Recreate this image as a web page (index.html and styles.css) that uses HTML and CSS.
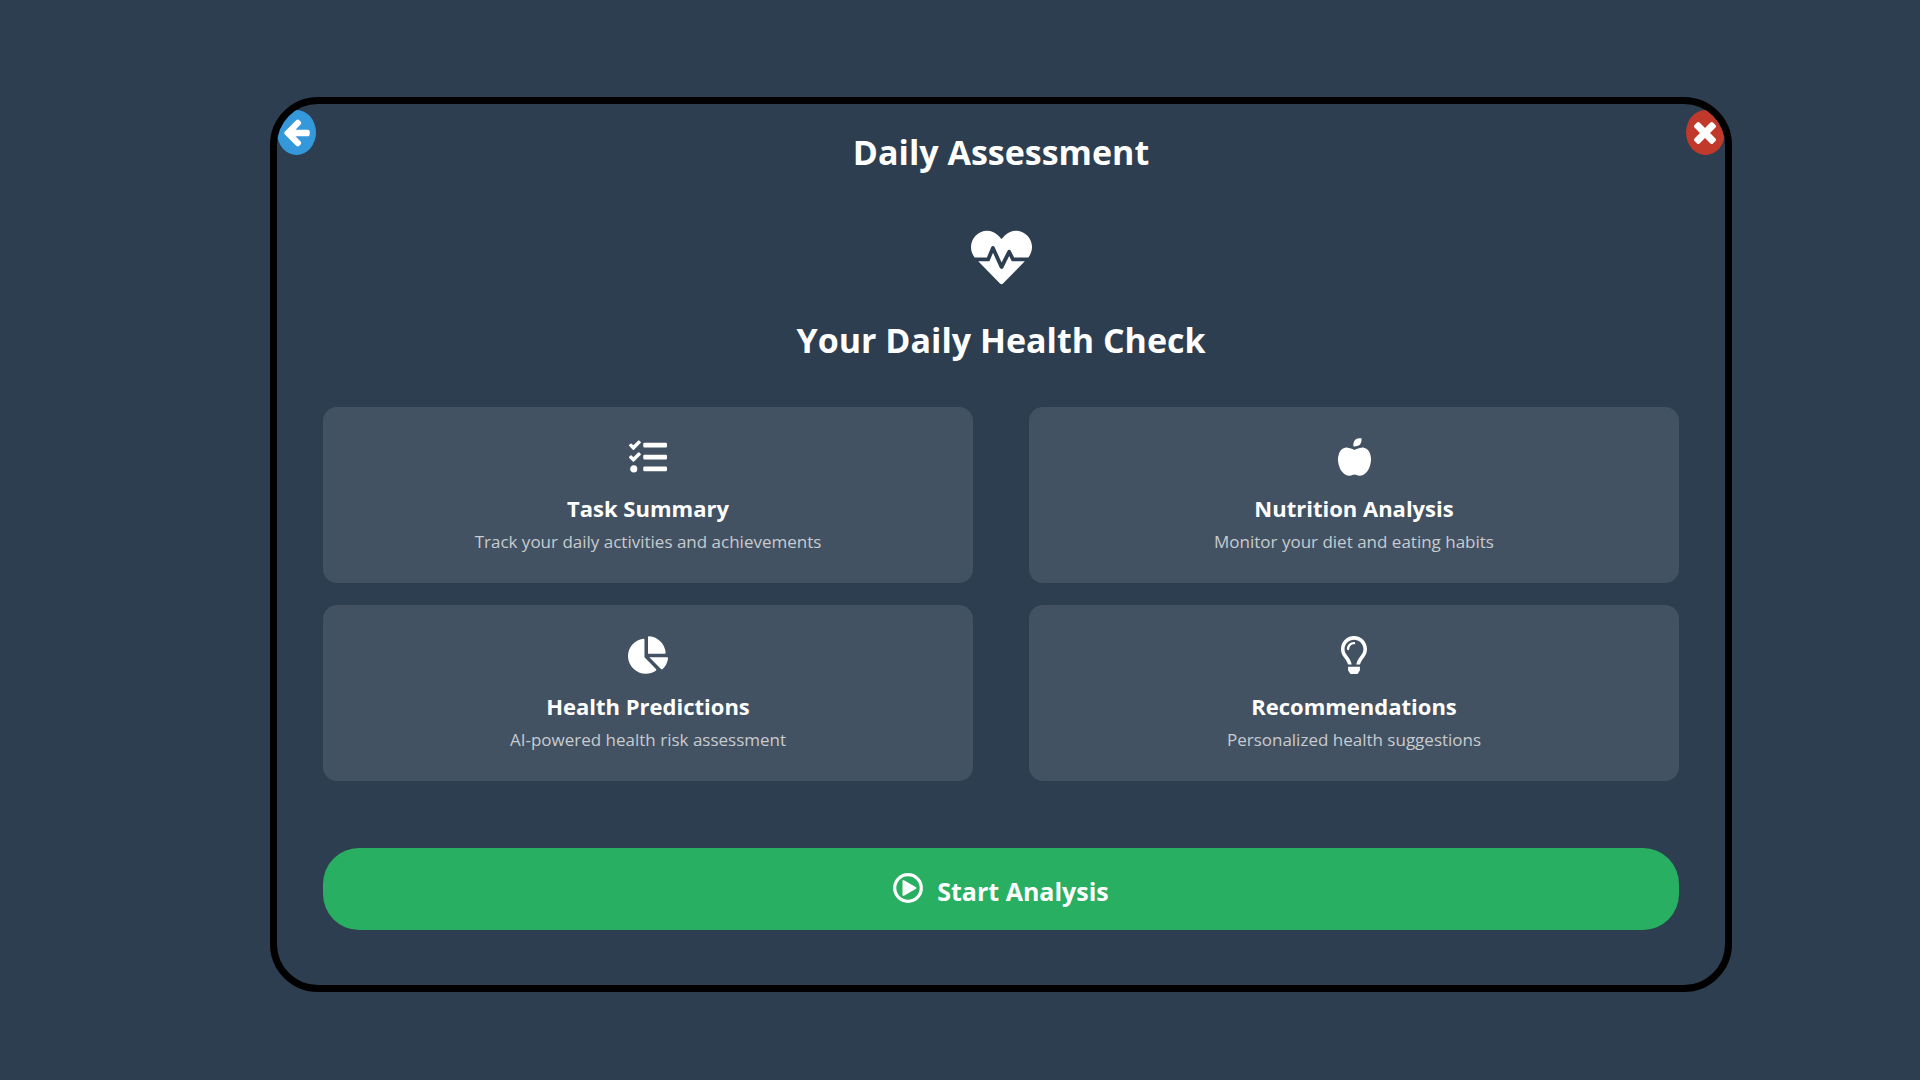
FILE: index.html
```html
<!DOCTYPE html>
<html lang="en">
<head>
<meta charset="utf-8">
<meta name="viewport" content="width=device-width, initial-scale=1">
<title>Daily Assessment</title>
<link rel="stylesheet" href="styles.css">
</head>
<body>
<main class="panel">
  <header class="panel-header">
    <button class="round-button back" type="button" aria-label="Back">
      <svg width="26" height="28" viewBox="64 150 1472 1620" aria-hidden="true"><path d="M1536 896v128q0 53-32.500 90.500t-84.500 37.500h-704l293 294q38 36 38 90t-38 90l-75 76q-37 37-90 37-52 0-91-37l-651-652q-37-37-37-90 0-52 37-91l651-650q38-38 91-38 52 0 90 38l75 74q38 38 38 91t-38 91l-293 293h704q52 0 84.500 37.500t32.500 90.500z"/></svg>
    </button>
    <h1 class="title">Daily Assessment</h1>
    <button class="round-button close" type="button" aria-label="Close">
      <svg width="22" height="22" viewBox="302 366 1188 1188" aria-hidden="true"><path d="M1490 1322q0 40-28 68l-136 136q-28 28-68 28t-68-28l-294-294-294 294q-28 28-68 28t-68-28l-136-136q-28-28-28-68t28-68l294-294-294-294q-28-28-28-68t28-68l136-136q28-28 68-28t68 28l294 294 294-294q28-28 68-28t68 28l136 136q28 28 28 68t-28 68l-294 294 294 294q28 28 28 68z"/></svg>
    </button>
  </header>

  <section class="intro">
    <svg width="61" height="61" viewBox="0 0 512 512" aria-hidden="true"><path d="M320.2 243.8l-49.7 99.4c-6 12.1-23.4 11.7-28.9-.6l-56.9-126.3-30 71.7H60.6l182.5 186.5c7.1 7.3 18.6 7.3 25.7 0L451.4 288H342.3l-22.1-44.2zM473.7 73.9l-2.4-2.5c-51.5-52.6-135.8-52.6-187.4 0L256 100l-27.9-28.5c-51.5-52.7-135.9-52.7-187.4 0l-2.4 2.4C-10.4 123.7-12.5 203 31 256h102.4l35.9-86.2c5.4-12.9 23.6-13.1 29.3-.4l58.2 129.3 49-97.9c5.9-11.8 22.7-11.8 28.6 0l27.6 55.2H481c43.5-53 41.4-132.3-7.3-182.1z"/></svg>
    <h2 class="title">Your Daily Health Check</h2>
  </section>

  <section class="cards">
    <article class="card">
      <svg width="38" height="38" viewBox="0 0 512 512" aria-hidden="true"><path d="M139.61 35.5a12 12 0 0 0-17 0L58.93 98.81l-22.7-22.12a12 12 0 0 0-17 0L3.53 92.41a12 12 0 0 0 0 17l47.59 47.4a12.78 12.78 0 0 0 17.61 0l15.59-15.62L156.52 69a12.09 12.09 0 0 0 .09-17zm0 159.19a12 12 0 0 0-17 0l-63.68 63.72-22.7-22.1a12 12 0 0 0-17 0L3.53 252a12 12 0 0 0 0 17L51 316.5a12.77 12.77 0 0 0 17.6 0l15.7-15.69 72.2-72.22a12 12 0 0 0 .09-16.9zM64 368c-26.49 0-48.59 21.5-48.59 48S37.53 464 64 464a48 48 0 0 0 0-96zm432 16H208a16 16 0 0 0-16 16v32a16 16 0 0 0 16 16h288a16 16 0 0 0 16-16v-32a16 16 0 0 0-16-16zm0-320H208a16 16 0 0 0-16 16v32a16 16 0 0 0 16 16h288a16 16 0 0 0 16-16V80a16 16 0 0 0-16-16zm0 160H208a16 16 0 0 0-16 16v32a16 16 0 0 0 16 16h288a16 16 0 0 0 16-16v-32a16 16 0 0 0-16-16z"/></svg>
      <h3>Task Summary</h3>
      <p>Track your daily activities and achievements</p>
    </article>
    <article class="card">
      <svg width="33" height="38" viewBox="0 0 448 512" aria-hidden="true"><path d="M350.85 129c25.97 4.67 47.27 18.67 63.92 42 14.65 20.67 24.64 46.67 29.96 78 4.67 28.67 4.32 57.33-1 86-7.99 47.33-23.97 87-47.94 119-28.64 38.67-64.59 58-107.87 58-10.66 0-22.3-3.33-34.96-10-8.66-5.33-18.31-8-28.97-8s-20.3 2.67-28.97 8c-12.66 6.67-24.3 10-34.96 10-43.28 0-79.23-19.33-107.87-58-23.97-32-39.95-71.67-47.94-119-5.32-28.67-5.67-57.33-1-86 5.32-31.33 15.31-57.33 29.96-78 16.65-23.33 37.95-37.33 63.92-42 15.98-2.67 37.95-.33 65.92 7 23.97 6.67 44.28 14.67 60.93 24 16.65-9.33 36.96-17.33 60.93-24 27.98-7.33 49.96-9.67 65.94-7zm-54.94-41c-9.32 8.67-21.65 15-36.96 19-10.66 3.33-22.3 5-34.96 5l-14.98-1c-1.33-9.33-1.33-20 0-32 2.67-24 10.32-42.33 22.97-55 9.32-8.67 21.65-15 36.96-19 10.66-3.33 22.3-5 34.96-5l14.98 1 1 15c0 12.67-1.67 24.33-4.99 35-3.99 15.33-10.31 27.67-18.98 37z"/></svg>
      <h3>Nutrition Analysis</h3>
      <p>Monitor your diet and eating habits</p>
    </article>
    <article class="card">
      <svg width="40" height="38" viewBox="0 0 544 512" aria-hidden="true"><path d="M527.79 288H290.5l158.03 158.03c6.04 6.04 15.98 6.53 22.19.68 38.7-36.46 65.32-85.61 73.13-140.86 1.34-9.46-6.51-17.85-16.06-17.85zm-15.83-64.8C503.72 103.74 408.26 8.28 288.8.04 279.68-.59 272 7.1 272 16.24V240h223.77c9.14 0 16.82-7.68 16.19-16.8zM224 288V50.71c0-9.55-8.39-17.4-17.84-16.06C86.99 51.49-4.1 155.6.14 280.37 4.5 408.51 114.83 513.13 243.03 511.98c50.4-.45 96.96-15.83 135.29-41.96 7.91-5.39 8.42-16.92 1.67-23.67L224 288z"/></svg>
      <h3>Health Predictions</h3>
      <p>AI-powered health risk assessment</p>
    </article>
    <article class="card">
      <svg width="26" height="38" viewBox="0 0 352 512" aria-hidden="true"><path d="M176 80c-52.94 0-96 43.06-96 96 0 8.84 7.16 16 16 16s16-7.16 16-16c0-35.3 28.72-64 64-64 8.84 0 16-7.16 16-16s-7.16-16-16-16zM96.06 459.17c0 3.15.93 6.22 2.68 8.84l24.51 36.84c2.97 4.46 7.97 7.14 13.32 7.14h78.85c5.36 0 10.36-2.68 13.32-7.14l24.51-36.84c1.74-2.62 2.67-5.7 2.68-8.84l.05-43.18H96.02l.04 43.18zM176 0C73.72 0 0 82.97 0 176c0 44.37 16.45 84.85 43.56 115.78 16.64 18.99 42.74 58.8 52.42 92.16v.06h48v-.12c-.01-4.77-.72-9.51-2.15-14.07-5.59-17.81-22.82-64.77-62.17-109.67-20.54-23.43-31.52-53.15-31.61-84.14-.2-73.64 59.67-128 127.95-128 70.58 0 128 57.42 128 128 0 30.97-11.24 60.85-31.65 84.14-39.11 44.61-56.42 91.47-62.1 109.46a47.507 47.507 0 0 0-2.22 14.3v.1h48v-.05c9.68-33.37 35.78-73.18 52.42-92.16C335.55 260.85 352 220.37 352 176 352 78.8 273.2 0 176 0z"/></svg>
      <h3>Recommendations</h3>
      <p>Personalized health suggestions</p>
    </article>
  </section>

  <button class="start" type="button">
    <svg width="30" height="30" viewBox="0 0 30 30" aria-hidden="true"><circle cx="15" cy="15" r="13.300" fill="none" stroke="#fff" stroke-width="3.200"/><path d="M10.500 8v14L22.500 15z" stroke="#fff" stroke-width="2" stroke-linejoin="round"/></svg>
    <span>Start Analysis</span>
  </button>
</main>
</body>
</html>
```
FILE: styles.css
```css
* {
  box-sizing: border-box;
}

body {
  margin: 0;
  min-height: 100vh;
  padding: 97px 188px 88px 270px;
  background: #2d3e50;
  color: #fff;
  font-family: "Open Sans", "Noto Sans", sans-serif;
}

h1, h2, h3, p {
  margin: 0;
}

svg {
  display: block;
  flex: none;
  fill: #fff;
}

button {
  border: 0;
  padding: 0;
  color: inherit;
  font: inherit;
  cursor: pointer;
}

.panel {
  display: flex;
  flex-direction: column;
  overflow: hidden;
  padding-bottom: 55px;
  border: 7px solid #000;
  border-radius: 48px;
}

.panel-header {
  display: flex;
  align-items: flex-start;
  justify-content: space-between;
  padding-top: 6px;
}

.round-button {
  display: flex;
  align-items: center;
  justify-content: center;
  width: 39px;
  height: 45px;
  border-radius: 50%;
}

.back {
  background: #3498db;
}

.close {
  background: #c0392b;
}

.title {
  font-size: 34px;
  line-height: 48px;
  font-weight: 700;
}

.panel-header .title {
  padding-top: 18px;
}

.intro {
  display: flex;
  flex-direction: column;
  align-items: center;
  gap: 28px;
  padding-top: 51px;
}

.cards {
  display: grid;
  grid-template-columns: 1fr 1fr;
  gap: 22px 56px;
  padding: 43px 46px 0;
}

.card {
  display: flex;
  flex-direction: column;
  align-items: center;
  min-height: 176px;
  padding: 31px 24px 24px;
  border-radius: 14px;
  background: #435262;
  text-align: center;
}

.card h3 {
  margin-top: 14px;
  font-size: 22px;
  line-height: 36px;
}

.card p {
  margin-top: 4px;
  color: #c7cbd0;
  font-size: 17px;
  line-height: 24px;
}

.start {
  display: flex;
  align-items: center;
  justify-content: center;
  gap: 14px;
  height: 82px;
  margin: 67px 46px 0;
  border-radius: 36px;
  background: #29af61;
  font-size: 25px;
  font-weight: 700;
}

.start svg {
  margin-bottom: 2px;
}

.start span {
  padding-top: 4px;
}
```
